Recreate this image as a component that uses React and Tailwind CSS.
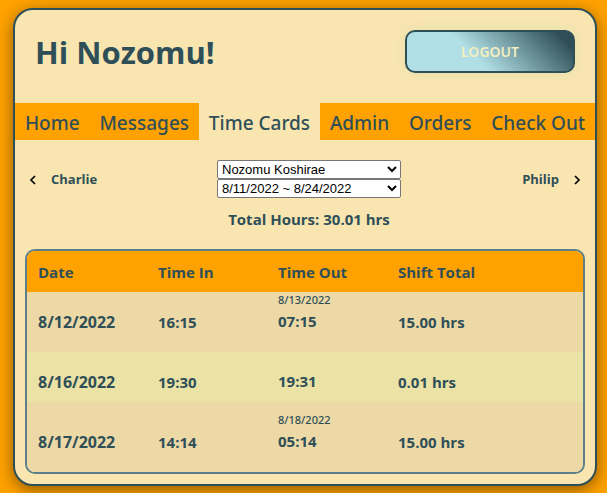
import React from "react";

const tabs = ["Home", "Messages", "Time Cards", "Admin", "Orders", "Check Out"];

const shifts = [
  { date: "8/12/2022", timeIn: "16:15", outDate: "8/13/2022", timeOut: "07:15", total: "15.00 hrs", row: "h-[60px] bg-[#ecd9a6]", pad: "pt-0" },
  { date: "8/16/2022", timeIn: "19:30", outDate: "", timeOut: "19:31", total: "0.01 hrs", row: "h-[50px] bg-[#ebe2a6]", pad: "pt-0" },
  { date: "8/17/2022", timeIn: "14:14", outDate: "8/18/2022", timeOut: "05:14", total: "15.00 hrs", row: "h-[70px] bg-[#ecd9a6]", pad: "pt-[10px]" },
];

function Chevron({ d }) {
  return (
    <svg width="8" height="10" viewBox="0 0 8 10" fill="none" stroke="#000" strokeWidth="1.7" aria-hidden="true">
      <path d={d} />
    </svg>
  );
}

function Picker({ label, value }) {
  return (
    <select
      aria-label={label}
      defaultValue={value}
      className="block h-[19px] w-full rounded-[2px] border border-[#767676] bg-white font-['Liberation_Sans',Arial,sans-serif] text-[13px] leading-4 font-normal text-black"
    >
      <option>{value}</option>
    </select>
  );
}

function Cell({ pad, size = "text-[15px]", children }) {
  return (
    <td className={`${pad} pl-[11px] align-top`}>
      <div className={`pt-[17px] ${size} leading-[26px]`}>{children}</div>
    </td>
  );
}

export default function App() {
  return (
    <div className="min-h-screen bg-[#ffa200] pt-2 pr-[10px] pb-[7px] pl-[13px] font-['Open_Sans','Noto_Sans',sans-serif] text-[#2f4f58]">
      <main className="rounded-[20px] border-2 border-[#2f4f58] bg-[#f9e5b0] pb-[10px] shadow-[0_4px_16px_rgba(0,0,0,0.45)]">
        <header className="flex h-[93px] items-start justify-between pt-5 pr-5 pl-5">
          <h1 className="text-[31px] leading-[44px] font-bold">Hi Nozomu!</h1>
          <button
            type="button"
            className="h-[43px] w-[170px] rounded-[10px] border-2 border-[#2f4f58] bg-[linear-gradient(45deg,#b0dfe5_40%,#2f4f58_92%)] font-['Noto_Sans',sans-serif] text-[14px] leading-5 font-semibold text-[#f4efc0] shadow-[0_0_12px_rgba(176,223,180,0.3)]"
          >
            LOGOUT
          </button>
        </header>

        <nav className="flex h-[37px] bg-[#ffa200] font-['Noto_Sans',sans-serif] text-[19px] leading-10 font-medium">
          {tabs.map((tab) => (
            <a
              key={tab}
              href="#"
              aria-current={tab === "Time Cards" ? "page" : undefined}
              className={`flex-auto text-center whitespace-nowrap ${tab === "Time Cards" ? "bg-[#f9e5b0]" : ""}`}
            >
              {tab}
            </a>
          ))}
        </nav>

        <section className="grid grid-cols-[1fr_192px_1fr] items-center px-[14px] pt-5 text-[13px] font-bold">
          <button type="button" className="flex items-center gap-[14px] pt-[2px]">
            <Chevron d="M6 1 2 5l4 4" />
            Charlie
          </button>
          <div className="pl-2">
            <Picker label="Employee" value="Nozomu Koshirae" />
            <Picker label="Pay period" value="8/11/2022 ~ 8/24/2022" />
          </div>
          <button type="button" className="flex items-center justify-end gap-[14px] pt-[2px]">
            Philip
            <Chevron d="m2 1 4 4-4 4" />
          </button>
        </section>

        <p className="pt-[9px] pb-[18px] pl-2 text-center text-[15px] leading-6 font-bold">Total Hours: 30.01 hrs</p>

        <div className="mx-[10px] overflow-hidden rounded-[10px] border-2 border-[#5c7f8a]">
          <table className="w-full table-fixed border-collapse text-left text-[15px] font-bold">
            <colgroup>
              <col className="w-[120px]" />
              <col className="w-[120px]" />
              <col className="w-[120px]" />
              <col />
            </colgroup>
            <thead>
              <tr className="h-[41px] bg-[#ffa200]">
                {["Date", "Time In", "Time Out", "Shift Total"].map((h) => (
                  <th key={h} scope="col" className="pt-px pl-[11px] font-bold">{h}</th>
                ))}
              </tr>
            </thead>
            <tbody>
              {shifts.map((s) => (
                <tr key={s.date} className={s.row}>
                  <Cell pad={s.pad} size="text-[16px]">{s.date}</Cell>
                  <Cell pad={s.pad}>{s.timeIn}</Cell>
                  <td className={`${s.pad} pl-[11px] align-top`}>
                    <div className="h-4 font-['Noto_Sans',sans-serif] text-[11px] leading-4 font-medium">{s.outDate}</div>
                    <div className="leading-[26px]">{s.timeOut}</div>
                  </td>
                  <Cell pad={s.pad}>{s.total}</Cell>
                </tr>
              ))}
            </tbody>
          </table>
        </div>
      </main>
    </div>
  );
}
